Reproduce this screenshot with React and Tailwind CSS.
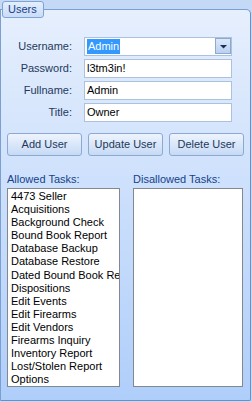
const allowed = [
  "4473 Seller",
  "Acquisitions",
  "Background Check",
  "Bound Book Report",
  "Database Backup",
  "Database Restore",
  "Dated Bound Book Report",
  "Dispositions",
  "Edit Events",
  "Edit Firearms",
  "Edit Vendors",
  "Firearms Inquiry",
  "Inventory Report",
  "Lost/Stolen Report",
  "Options",
];

function Row({ label, children }) {
  return (
    <div className="flex items-center h-[19px]">
      <div className="w-[71px] text-right text-[11px] leading-[13px] text-[#1e395b]">{label}</div>
      <div className="ml-[12px] w-[148px] h-[19px]">{children}</div>
    </div>
  );
}

function TextBox({ value }) {
  return (
    <div className="w-full h-full bg-white border border-[#abc1de] pl-[2px] text-[11px] leading-[17px] text-black whitespace-nowrap overflow-hidden">
      {value}
    </div>
  );
}

function Btn({ children }) {
  return (
    <div className="w-[75px] h-[23px] flex items-center justify-center border border-[#8ea9cf] rounded-[3px] bg-linear-to-b from-[#eef4fd] to-[#c6daf5] text-[11px] text-[#1e395b]">
      {children}
    </div>
  );
}

export default function App() {
  return (
    <div className="w-[252px] h-[402px] bg-[#c3d9f5] pt-[9px] font-['Liberation_Sans',Arial,sans-serif] overflow-hidden">
      <div className="relative w-[251px] h-[392px] border border-[#7ba0d0] border-r-[#6690c9] border-b-[#6690c9] rounded-tr-[5px] rounded-br-[2px] bg-linear-to-b from-[#e6effd] to-[#afcefa]">
        <div className="absolute left-[1px] -top-[9px] h-[17px] w-[42px] border border-[#7fa3d2] rounded-[3px] bg-linear-to-b from-[#e4eefc] to-[#cadcf6] text-[11px] leading-[15px] text-[#15428b] pl-[5px]">
          Users
        </div>

        <div className="pt-[27px] flex flex-col gap-[3px]">
          <Row label="Username:">
            <div className="relative w-full h-full bg-white border border-[#abc1de] text-[11px] leading-[17px]">
              <span className="ml-[2px] mt-[1px] inline-block h-[15px] leading-[15px] px-[1px] bg-[#3399ff] text-white">Admin</span>
              <div className="absolute right-[0px] top-[0px] w-[16px] h-[16px] border border-[#8ea9cf] bg-linear-to-b from-[#dce8f8] to-[#b9d1f1] flex items-center justify-center">
                <svg width="7" height="5" viewBox="0 0 7 5">
                  <path d="M0 1 H7 L3.5 4.5 Z" fill="#15305c" />
                </svg>
              </div>
            </div>
          </Row>
          <Row label="Password:">
            <TextBox value="l3tm3in!" />
          </Row>
          <Row label="Fullname:">
            <TextBox value="Admin" />
          </Row>
          <Row label="Title:">
            <TextBox value="Owner" />
          </Row>
        </div>

        <div className="mt-[11px] pl-[6px] flex gap-[6px]">
          <Btn>Add User</Btn>
          <Btn>Update User</Btn>
          <Btn>Delete User</Btn>
        </div>

        <div className="mt-[17px] pl-[6px] flex gap-[13px]">
          <div className="flex flex-col gap-[2px] w-[113px]">
            <div className="h-[13px] text-[11px] leading-[13px] text-[#15428b]">Allowed Tasks:</div>
            <div className="h-[199px] bg-white border border-[#828790] pl-[3px] pt-[1px] overflow-hidden">
              {allowed.map((t) => (
                <div key={t} className="h-[13.1px] text-[11px] leading-[13px] text-black whitespace-nowrap">
                  {t}
                </div>
              ))}
            </div>
          </div>
          <div className="flex flex-col gap-[2px] w-[110px]">
            <div className="h-[13px] text-[11px] leading-[13px] text-[#15428b]">Disallowed Tasks:</div>
            <div className="h-[199px] bg-white border border-[#828790]"></div>
          </div>
        </div>
      </div>
    </div>
  );
}
